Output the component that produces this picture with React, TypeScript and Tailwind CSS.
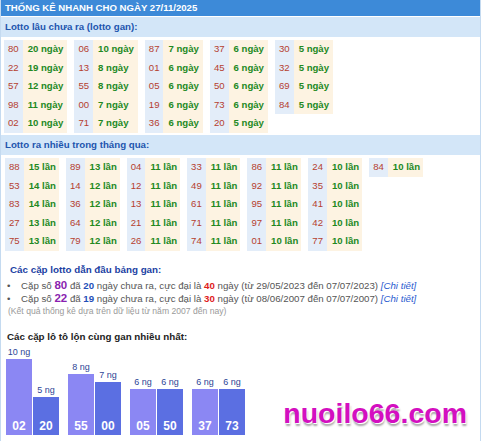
import React from "react";

type Cell = [string, string];

const gan: Cell[][] = [
  [["80", "20 ngày"], ["22", "19 ngày"], ["57", "12 ngày"], ["98", "11 ngày"], ["02", "10 ngày"]],
  [["06", "10 ngày"], ["13", "8 ngày"], ["55", "8 ngày"], ["00", "7 ngày"], ["71", "7 ngày"]],
  [["87", "7 ngày"], ["01", "6 ngày"], ["05", "6 ngày"], ["19", "6 ngày"], ["36", "6 ngày"]],
  [["37", "6 ngày"], ["45", "6 ngày"], ["50", "6 ngày"], ["73", "6 ngày"], ["20", "5 ngày"]],
  [["30", "5 ngày"], ["32", "5 ngày"], ["69", "5 ngày"], ["84", "5 ngày"]],
];

const nhieu: Cell[][] = [
  [["88", "15 lần"], ["53", "14 lần"], ["83", "14 lần"], ["27", "13 lần"], ["75", "13 lần"]],
  [["89", "13 lần"], ["14", "12 lần"], ["36", "12 lần"], ["64", "12 lần"], ["79", "12 lần"]],
  [["04", "11 lần"], ["12", "11 lần"], ["13", "11 lần"], ["21", "11 lần"], ["26", "11 lần"]],
  [["33", "11 lần"], ["49", "11 lần"], ["61", "11 lần"], ["71", "11 lần"], ["74", "11 lần"]],
  [["86", "11 lần"], ["92", "11 lần"], ["95", "11 lần"], ["97", "11 lần"], ["01", "10 lần"]],
  [["24", "10 lần"], ["35", "10 lần"], ["41", "10 lần"], ["42", "10 lần"], ["77", "10 lần"]],
  [["84", "10 lần"]],
];

const pairs: [string, number, string, number][] = [
  ["02", 10, "20", 5],
  ["55", 8, "00", 7],
  ["05", 6, "50", 6],
  ["37", 6, "73", 6],
];

function Group({ rows, tight }: { rows: Cell[]; tight?: boolean }) {
  return (
    <div className="flex self-start">
      <div className="bg-[#e3edf9] flex flex-col">
        {rows.map((r, i) => (
          <div key={i} className="h-[18.6px] flex items-center pl-[4px] pr-[4px] text-[#b5402f]">
            {r[0]}
          </div>
        ))}
      </div>
      <div className="bg-[#fdf3e2] flex flex-col">
        {rows.map((r, i) => (
          <div
            key={i}
            className={
              "h-[18.6px] flex items-center pl-[5px] font-bold text-[#22891f] " + (tight ? "pr-[3px]" : "pr-[4px]")
            }
          >
            {r[1]}
          </div>
        ))}
      </div>
    </div>
  );
}

function Band({ children }: { children: React.ReactNode }) {
  return (
    <div className="h-[20px] bg-[#d3e6f8] flex items-center pl-[4px] text-[9.7px] font-bold text-[#1d55ae]">
      {children}
    </div>
  );
}

function Bar({ label, n, dark }: { label: string; n: number; dark: boolean }) {
  return (
    <div className="flex flex-col items-center w-[26px]">
      <div className="text-[9px] leading-[11px] text-[#2e4596] mb-[1px] whitespace-nowrap">{n} ng</div>
      <div
        className={
          "w-full flex items-end justify-center pb-[2px] text-white font-bold text-[12px] leading-[13px] " +
          (dark ? "bg-[#5b6fe2]" : "bg-[#8b87f3]")
        }
        style={{ height: `${n * 7.6}px` }}
      >
        {label}
      </div>
    </div>
  );
}

export default function App() {
  return (
    <div className="relative w-[481px] h-[441px] overflow-hidden bg-white border-x border-[#c4daf0] font-['Liberation_Sans',Arial,sans-serif]">
      <div className="h-[16px] bg-[#3d8ad8] flex items-center pl-[4px] text-white font-bold text-[9.6px]">
        THỐNG KÊ NHANH CHO NGÀY 27/11/2025
      </div>
      <div className="mt-[1px]">
        <Band>Lotto lâu chưa ra (lotto gan):</Band>
      </div>
      <div className="mt-[3px] pl-[3px] flex gap-[7px] text-[9.6px] h-[93px]">
        {gan.map((g, i) => (
          <Group key={i} rows={g} />
        ))}
      </div>
      <div className="mt-[2px]">
        <Band>Lotto ra nhiều trong tháng qua:</Band>
      </div>
      <div className="mt-[3px] pl-[4px] flex gap-[7px] text-[9.6px] h-[93px]">
        {nhieu.map((g, i) => (
          <Group key={i} rows={g} tight />
        ))}
      </div>

      <div className="mt-[13px] pl-[9px] text-[9.8px] font-bold text-[#1b3fa3] leading-[12px]">
        Các cặp lotto dẫn đầu bảng gan:
      </div>
      <div className="mt-[3px] pl-[6px] text-[9.7px] text-[#555] leading-[13px] flex flex-col">
        <div className="flex items-baseline">
          <span className="w-[14px]">•</span>
          <span>
            Cặp số <b className="text-[11.5px] text-[#8a1fb0]">80</b> đã <b className="text-[#1f4fb8]">20</b> ngày chưa ra, cực đại là{" "}
            <b className="text-[#e0201b]">40</b> ngày (từ 29/05/2023 đến 07/07/2023){" "}
            <i className="text-[#2a5bd0]">[Chi tiết]</i>
          </span>
        </div>
        <div className="flex items-baseline">
          <span className="w-[14px]">•</span>
          <span>
            Cặp số <b className="text-[11.5px] text-[#8a1fb0]">22</b> đã <b className="text-[#1f4fb8]">19</b> ngày chưa ra, cực đại là{" "}
            <b className="text-[#e0201b]">30</b> ngày (từ 08/06/2007 đến 07/07/2007){" "}
            <i className="text-[#2a5bd0]">[Chi tiết]</i>
          </span>
        </div>
      </div>
      <div className="pl-[7px] text-[8.6px] text-[#9a9a9a] leading-[12px]">
        (Kết quả thống kê dựa trên dữ liệu từ năm 2007 đến nay)
      </div>

      <div className="mt-[14px] pl-[6px] text-[9.8px] font-bold text-[#222] leading-[12px]">
        Các cặp lô tô lộn cùng gan nhiều nhất:
      </div>
      <div className="absolute left-[5px] top-[347px] h-[88px] flex items-end gap-[9px]">
        {pairs.map((p, i) => (
          <div key={i} className="flex items-end gap-[1px]">
            <Bar label={p[0]} n={p[1]} dark={false} />
            <Bar label={p[2]} n={p[3]} dark={true} />
          </div>
        ))}
      </div>

      <div className="absolute right-[13px] top-[396px] text-[28.5px] leading-[34px] font-bold text-[#d40fc0] [text-shadow:1px_1px_0_#fff,1px_3px_2px_rgba(0,0,0,0.35)]">
        nuoilo66.com
      </div>
    </div>
  );
}
